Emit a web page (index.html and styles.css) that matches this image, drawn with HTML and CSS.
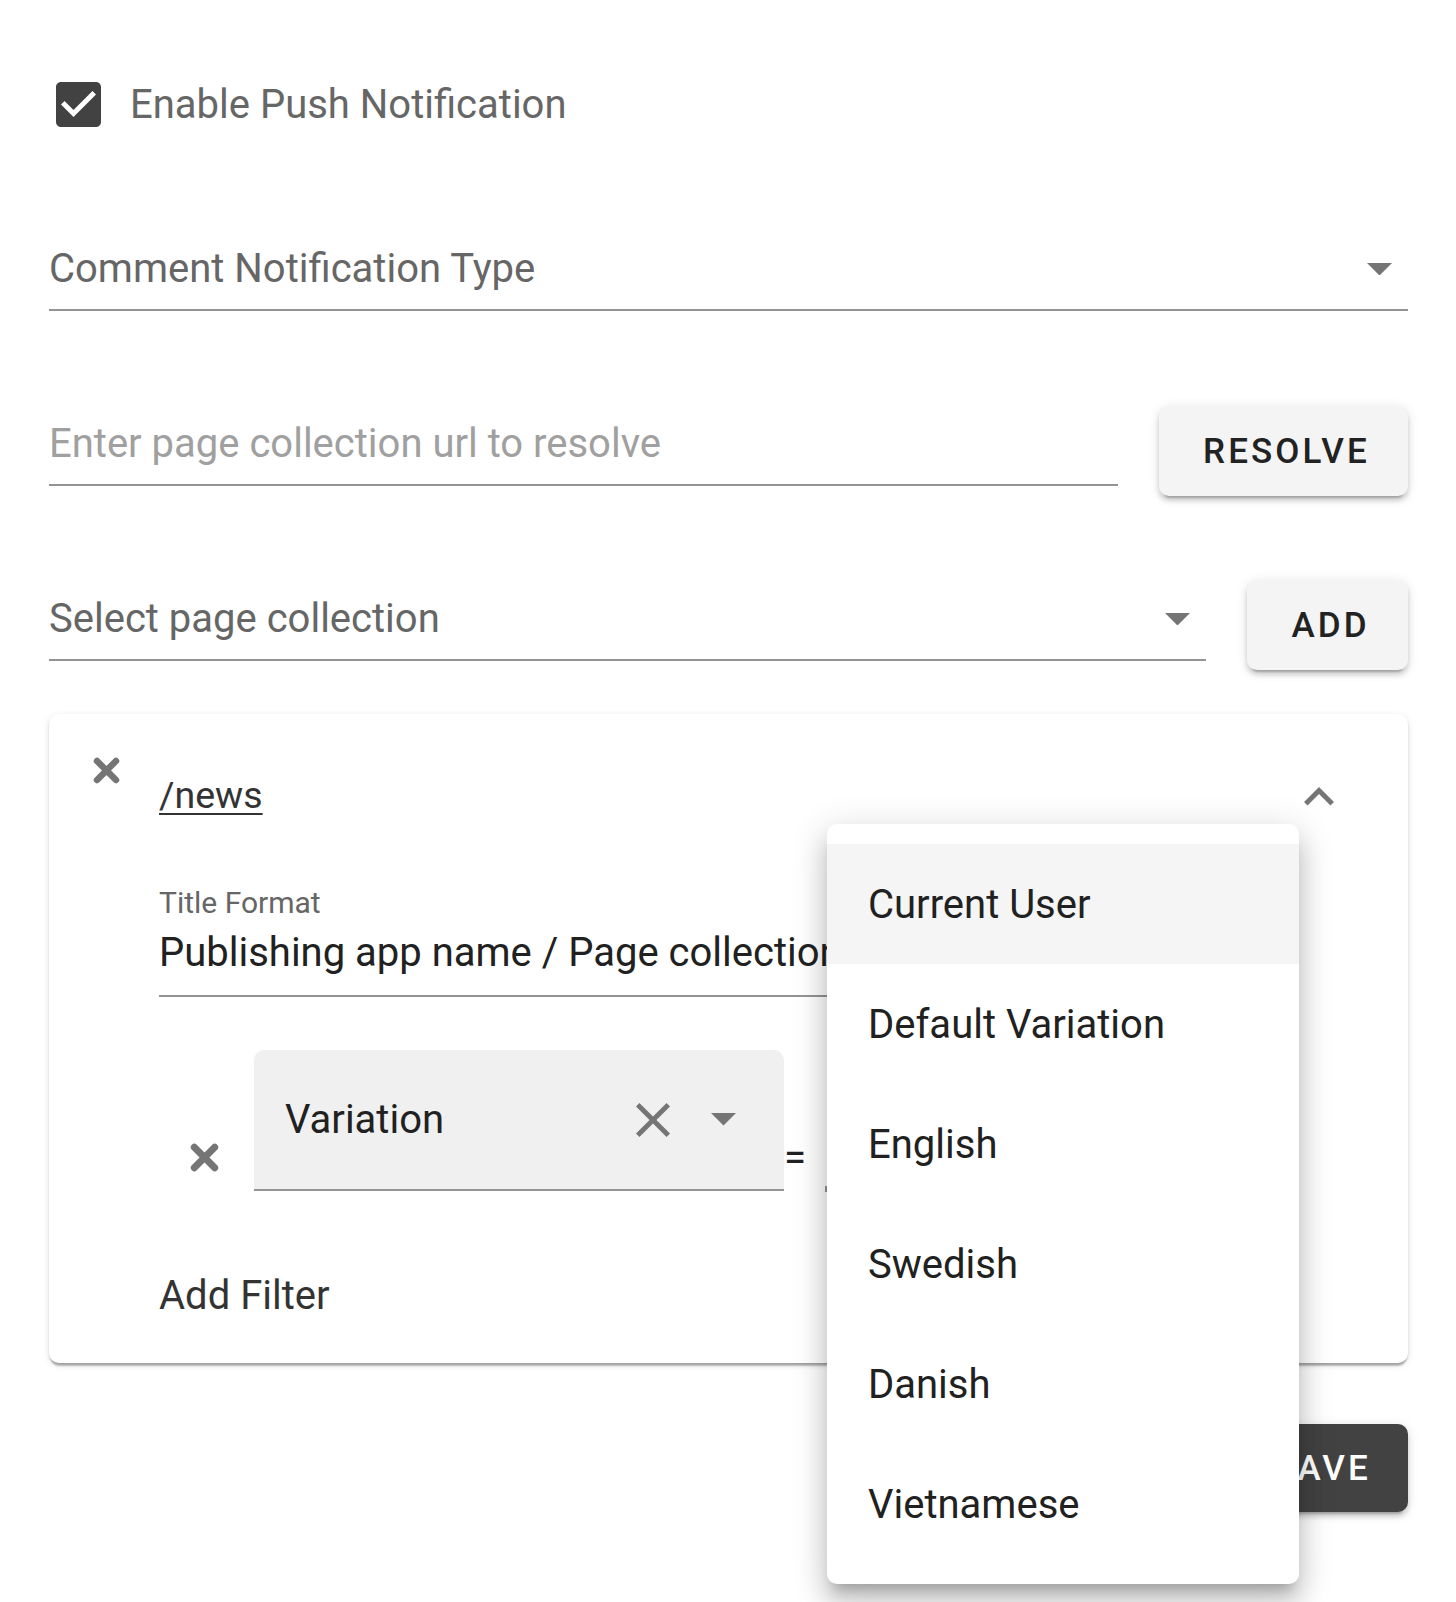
FILE: index.html
```html
<!DOCTYPE html>
<html>
<head>
<meta charset="utf-8">
<link rel="stylesheet" href="styles.css">
</head>
<body>
<div class="page">
  <div class="check-row">
    <svg class="checkbox" viewBox="3 3 18 18"><path fill="#424242" d="M19 3H5c-1.11 0-2 .9-2 2v14c0 1.1.89 2 2 2h14c1.11 0 2-.9 2-2V5c0-1.1-.89-2-2-2zm-9 14l-5-5 1.41-1.41L10 14.17l7.59-7.59L19 8l-9 9z"/></svg>
    <span class="check-label">Enable Push Notification</span>
  </div>

  <div class="field select-full">
    <span class="label-text">Comment Notification Type</span>
    <svg class="arrow" viewBox="7 10 10 5"><path fill="#757575" d="M7 10l5 5 5-5z"/></svg>
  </div>

  <div class="row row-url">
    <div class="field url-field">
      <span class="placeholder">Enter page collection url to resolve</span>
    </div>
    <button class="btn btn-light btn-resolve">RESOLVE</button>
  </div>

  <div class="row row-select">
    <div class="field select-field">
      <span class="label-text">Select page collection</span>
      <svg class="arrow" viewBox="7 10 10 5"><path fill="#757575" d="M7 10l5 5 5-5z"/></svg>
    </div>
    <button class="btn btn-light btn-add">ADD</button>
  </div>

  <div class="card">
    <div class="card-head">
      <svg class="x-bold" viewBox="0 0 27 27"><path d="M4 4L23 23M23 4L4 23" stroke="#757575" stroke-width="6.5" stroke-linecap="round"/></svg>
      <a class="news-link">/news</a>
      <svg class="chevron" viewBox="6 8 12 7.41"><path fill="#757575" d="M12 8l-6 6 1.41 1.41L12 10.83l4.59 4.58L18 14z"/></svg>
    </div>
    <div class="card-body">
      <div class="small-label">Title Format</div>
      <div class="title-input">Publishing app name / Page collection name</div>
      <div class="filter-row">
        <svg class="x-bold x-filter" viewBox="0 0 27 27"><path d="M4 4L23 23M23 4L4 23" stroke="#757575" stroke-width="6.5" stroke-linecap="round"/></svg>
        <div class="filled-select">
          <span class="filled-text">Variation</span>
          <svg class="clear" viewBox="5 5 14 14"><path fill="#757575" d="M19 6.41L17.59 5 12 10.59 6.41 5 5 6.41 10.59 12 5 17.59 6.41 19 12 13.41 17.59 19 19 17.59 13.41 12z"/></svg>
          <svg class="arrow arrow-filled" viewBox="7 10 10 5"><path fill="#757575" d="M7 10l5 5 5-5z"/></svg>
        </div>
        <span class="equals">=</span>
        <span class="value-field"></span>
      </div>
      <div class="add-filter">Add Filter</div>
    </div>
  </div>

  <div class="save-row">
    <button class="btn btn-dark">SAVE</button>
  </div>

  <ul class="menu">
    <li class="menu-item active">Current User</li>
    <li class="menu-item">Default Variation</li>
    <li class="menu-item">English</li>
    <li class="menu-item">Swedish</li>
    <li class="menu-item">Danish</li>
    <li class="menu-item">Vietnamese</li>
  </ul>
</div>
</body>
</html>
```

FILE: styles.css
```css
* { box-sizing: border-box; }
html, body { margin: 0; padding: 0; background: #fff; }
body {
  font-family: Roboto, "Noto Sans", sans-serif;
  width: 1456px;
  height: 1602px;
  overflow: hidden;
}
.page {
  position: relative;
  padding: 82px 48px 0 49px;
  width: 1456px;
  height: 1602px;
}
.check-row {
  display: flex;
  align-items: center;
  height: 45px;
  padding-left: 7px;
}
.checkbox { width: 45px; height: 45px; display: block; }
.check-label {
  margin-left: 29px;
  font-size: 40px;
  color: #666;
  line-height: 48px;
}
.field {
  display: flex;
  align-items: center;
  height: 82px;
  border-bottom: 2px solid #949494;
  font-size: 40px;
  line-height: 48px;
}
.select-full { margin-top: 102px; padding-right: 16px; }
.label-text { color: #666; flex: 1; }
.placeholder { color: #a0a0a0; }
.arrow { width: 25px; height: 12.5px; display: block; }
.row { display: flex; align-items: flex-start; }
.row-url { margin-top: 93px; }
.url-field { width: 1069px; }
.btn {
  border: none;
  font-family: Roboto, sans-serif;
  font-weight: 500;
  font-size: 35px;
  letter-spacing: 3.1px;
  border-radius: 10px;
  height: 90px;
  padding: 0 0 0 6px;
}
.btn-light {
  background: #f4f4f4;
  color: #222;
  box-shadow: 0 7px 2px -5px rgba(0,0,0,.2), 0 5px 5px 0 rgba(0,0,0,.14), 0 2px 12px 0 rgba(0,0,0,.12);
}
.btn-resolve { margin-left: 41px; width: 249px; margin-top: 2px; }
.row-select { margin-top: 83px; }
.select-field { width: 1157px; padding-right: 16px; }
.btn-add { margin-left: 41px; width: 161px; margin-top: 1px; }
.card {
  margin-top: 44px;
  height: 649px;
  border-radius: 10px;
  background: #fff;
  box-shadow: 0 5px 2px -2px rgba(0,0,0,.2), 0 2px 2px 0 rgba(0,0,0,.14), 0 2px 7px 0 rgba(0,0,0,.12);
  padding: 43px 74px 0 44px;
}
.card-head { display: flex; align-items: flex-start; }
.x-bold { width: 27px; height: 27px; display: block; }
.news-link {
  margin-left: 39px;
  margin-top: 14px;
  font-size: 37.5px;
  line-height: 48px;
  color: #333;
  text-decoration: underline;
  text-underline-offset: 5px;
  text-decoration-thickness: 2px;
}
.chevron { margin-left: auto; margin-top: 30px; width: 30px; height: 18.5px; display: block; }
.card-body { padding-left: 66px; }
.small-label {
  margin-top: 66px;
  font-size: 30px;
  line-height: 36px;
  color: #666;
}
.title-input {
  margin-top: 8px;
  width: 1040px;
  font-size: 40px;
  line-height: 48px;
  color: #212121;
  padding-bottom: 18px;
  border-bottom: 2px solid #949494;
  white-space: nowrap;
  overflow: hidden;
}
.filter-row {
  display: flex;
  align-items: flex-start;
  margin-top: 53px;
  padding-left: 31px;
}
.x-filter { width: 29px; height: 29px; margin-top: 93px; }
.filled-select {
  margin-left: 35px;
  width: 530px;
  height: 141px;
  background: #f0f0f0;
  border-radius: 10px 10px 0 0;
  border-bottom: 2px solid #949494;
  display: flex;
  align-items: center;
  padding: 0 48px 0 31px;
}
.filled-text { flex: 1; font-size: 40px; line-height: 48px; color: #212121; }
.clear { width: 34px; height: 34px; display: block; }
.arrow-filled { margin-left: 41px; }
.equals {
  margin-left: 0;
  margin-top: 84px;
  font-size: 40px;
  line-height: 48px;
  color: #212121;
}
.value-field {
  display: block;
  width: 300px;
  height: 6px;
  margin-top: 136px;
  margin-left: 19px;
  border-left: 2px solid #949494;
}
.add-filter {
  margin-top: 80px;
  font-size: 40px;
  line-height: 48px;
  color: #333;
}
.save-row { display: flex; justify-content: flex-end; margin-top: 61px; }
.btn-dark {
  background: #424242;
  color: #fff;
  width: 178px;
  height: 88px;
  box-shadow: 0 7px 2px -5px rgba(0,0,0,.2), 0 5px 5px 0 rgba(0,0,0,.14), 0 2px 12px 0 rgba(0,0,0,.12);
}
.menu {
  position: absolute;
  left: 827px;
  top: 824px;
  width: 472px;
  height: 760px;
  margin: 0;
  padding: 20px 0;
  list-style: none;
  background: #fff;
  border-radius: 10px;
  box-shadow: 0 12px 12px -7px rgba(0,0,0,.2), 0 20px 25px 2px rgba(0,0,0,.14), 0 7px 35px 5px rgba(0,0,0,.12);
}
.menu-item {
  height: 120px;
  display: flex;
  align-items: center;
  padding-left: 41px;
  font-size: 40px;
  color: #212121;
}
.menu-item.active { background: #f5f5f5; }
```
